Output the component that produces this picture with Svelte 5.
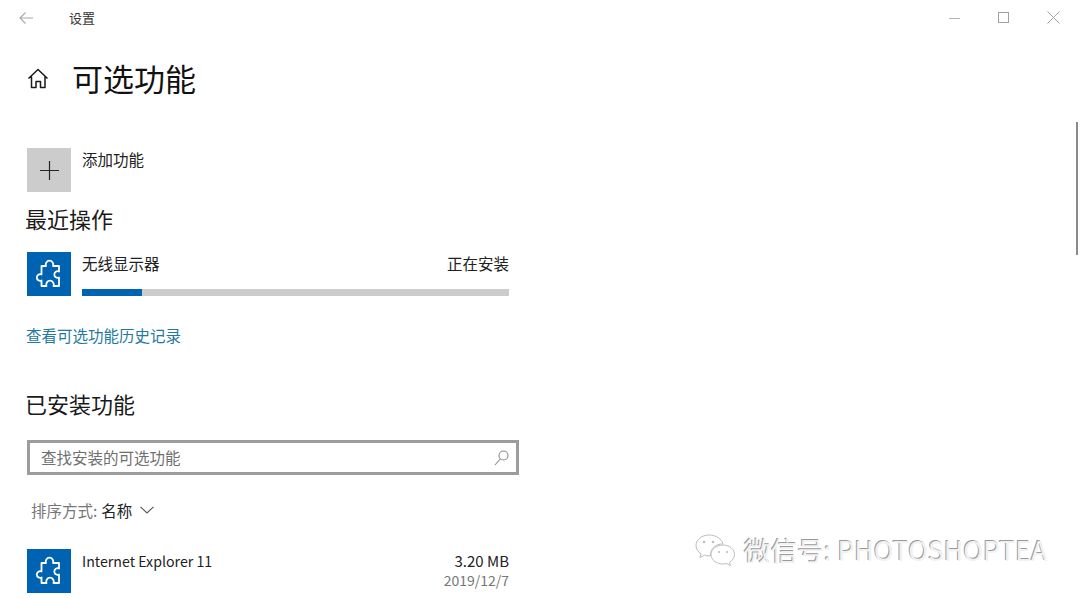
<script>
  const puzzle = 'M14.500 14H19a3.800 3.800 0 1 1 7 0h6v5.500a3.300 3.300 0 1 0 0 6V34h-5.500a3.800 3.800 0 1 0-7 0h-5v-5.500a3.300 3.300 0 1 1 0-6z';
</script>

{#snippet tile()}
  <div class="tile blue" aria-hidden="true">
    <svg width="44" height="44" viewBox="0 0 44 44" fill="none" stroke="#fff" stroke-width="1.8" stroke-linejoin="round">
      <path d={puzzle} />
    </svg>
  </div>
{/snippet}

<div class="page">
  <header class="titlebar">
    <svg class="back" width="14" height="12" viewBox="0 0 14 12" fill="none" stroke="#a8a8a8" stroke-width="1.1">
      <path d="M14 6H1M6.500.500 1 6l5.500 5.500" />
    </svg>
    <span class="app-name">设置</span>
  </header>

  <div class="page-title">
    <svg width="22" height="21" viewBox="0 0 22 21" fill="none" stroke="#1a1a1a" stroke-width="1.5" stroke-linejoin="round">
      <path d="M1.500 10.500 11 1.500l9.500 9M4.500 8.500V19.500h4.500v-6h4.500v6h4.500V8.500" />
    </svg>
    <h1>可选功能</h1>
  </div>

  <div class="add-row">
    <div class="tile grey" aria-hidden="true">
      <svg width="19" height="19" viewBox="0 0 19 19" stroke="#262626" stroke-width="1.2">
        <path d="M9.500 0v19M0 9.500h19" />
      </svg>
    </div>
    <span class="row-text">添加功能</span>
  </div>

  <h2 class="recent">最近操作</h2>

  <div class="feature">
    {@render tile()}
    <div class="feature-body">
      <div class="feature-line">
        <span class="row-text">无线显示器</span>
        <span class="row-text">正在安装</span>
      </div>
      <div class="progress"><div class="progress-fill"></div></div>
    </div>
  </div>

  <a class="history" href="#history">查看可选功能历史记录</a>

  <h2 class="installed">已安装功能</h2>

  <div class="search">
    <span class="placeholder">查找安装的可选功能</span>
    <svg width="15" height="16" viewBox="0 0 15 16" fill="none" stroke="#8a8a8a" stroke-width="1.1">
      <circle cx="9.500" cy="5.500" r="4.500" />
      <path d="M6.200 9 1 15" />
    </svg>
  </div>

  <div class="sort">
    <span class="sort-label">排序方式:</span>
    <span class="sort-value">名称</span>
    <svg width="14" height="8" viewBox="0 0 14 8" fill="none" stroke="#555" stroke-width="1.1">
      <path d="M.5.800 7 7l6.500-6.200" />
    </svg>
  </div>

  <div class="feature">
    {@render tile()}
    <div class="feature-body">
      <div class="feature-line ie">
        <span class="row-text">Internet Explorer 11</span>
        <span class="row-text">3.20 MB</span>
      </div>
      <div class="date">2019/12/7</div>
    </div>
  </div>

  <!-- window chrome and watermark sit over the page -->
  <div class="win-controls" aria-hidden="true">
    <svg width="12" height="12" viewBox="0 0 12 12" stroke="#b4b4b4" fill="none"><path d="M0 6.500h11" /></svg>
    <svg width="12" height="12" viewBox="0 0 12 12" stroke="#a0a0a0" fill="none"><rect x=".5" y=".5" width="10" height="10" /></svg>
    <svg width="13" height="13" viewBox="0 0 13 13" stroke="#a0a0a0" fill="none"><path d="M.5.500l12 12M12.500.500l-12 12" /></svg>
  </div>
  <div class="scrollbar"></div>

  <div class="watermark">
    <svg width="44" height="32" viewBox="0 0 44 32" fill="#fff" stroke="#bdbdbd" stroke-width="1">
      <path d="M14 1C7 1 1 5.500 1 11.500c0 3.500 2 6.300 5 8.300l-1 3.700 4.500-2.300c1.500.4 3 .6 4.500.6h1.500C15 15 21 9.500 28 10 27 5 21 1 14 1z" />
      <path d="M28 11c-6.500 0-12 4.300-12 9.500S21.500 30 28 30c1.300 0 2.600-.2 3.800-.5l3.700 2-1-3.200c3-1.800 5-4.600 5-7.800 0-5.200-5-9.500-11.500-9.500z" />
      <circle cx="9" cy="8" r="1.300" stroke="none" fill="#bdbdbd" />
      <circle cx="18" cy="8" r="1.300" stroke="none" fill="#bdbdbd" />
      <circle cx="24" cy="18" r="1.100" stroke="none" fill="#bdbdbd" />
      <circle cx="32" cy="18" r="1.100" stroke="none" fill="#bdbdbd" />
    </svg>
    <span>微信号: PHOTOSHOPTEA</span>
  </div>
</div>

<style>
  :global(body) {
    margin: 0;
    background: #fff;
  }

  .page {
    position: relative;
    width: 1080px;
    height: 598px;
    overflow: hidden;
    background: #fff;
    color: #1a1a1a;
    font-family: "Noto Sans CJK SC", "Noto Sans", sans-serif;
    font-size: 15.5px;
  }

  .titlebar {
    display: flex;
    align-items: center;
    height: 35px;
    padding-left: 19px;
    box-sizing: border-box;
  }
  .back { margin-right: 36px; }
  .app-name { font-size: 13px; color: #333; }

  .page-title {
    display: flex;
    align-items: center;
    height: 46px;
    margin-top: 20px;
    padding-left: 27px;
  }
  .page-title h1 {
    margin: 0 0 0 23px;
    font-size: 31px;
    font-weight: 400;
    line-height: 46px;
    color: #111;
  }

  .tile {
    display: grid;
    place-items: center;
    flex: none;
    width: 44px;
    height: 44px;
  }
  .tile.grey { background: #cccccc; }
  .tile.blue { background: #0063b1; }

  .add-row {
    display: flex;
    align-items: flex-start;
    gap: 11px;
    margin-top: 47px;
    padding-left: 27px;
  }
  .row-text {
    line-height: 22px;
    color: #222;
    white-space: nowrap;
  }

  h2 {
    margin: 0;
    padding-left: 25px;
    font-size: 22px;
    font-weight: 400;
    line-height: 32px;
    color: #1a1a1a;
  }
  .recent { margin-top: 10px; }
  .installed { margin-top: 40px; }

  .feature {
    display: flex;
    gap: 11px;
    width: 482px;
    margin-left: 27px;
  }
  .recent + .feature { margin-top: 18px; }
  .feature-body {
    flex: 1;
    min-width: 0;
    display: flex;
    flex-direction: column;
  }
  .feature-line {
    display: flex;
    justify-content: space-between;
  }
  .progress {
    height: 7px;
    margin-top: 15px;
    background: #cccccc;
  }
  .progress-fill {
    width: 14%;
    height: 100%;
    background: #0063b1;
  }

  .history {
    display: block;
    margin-top: 27px;
    padding-left: 26px;
    line-height: 24px;
    color: #1f7a9e;
    text-decoration: none;
  }

  .search {
    display: flex;
    align-items: center;
    justify-content: space-between;
    box-sizing: border-box;
    width: 492px;
    height: 35px;
    margin: 21px 0 0 27px;
    padding: 0 7px 0 11px;
    border: 3px solid #9c9c9c;
  }
  .placeholder { color: #6f6f6f; padding-bottom: 2px; }

  .sort {
    display: flex;
    align-items: center;
    height: 24px;
    margin: 23px 0 0 31px;
  }
  .sort-label { color: #777; }
  .sort-value { margin-left: 4px; color: #222; }
  .sort svg { margin-left: 8px; }

  .sort + .feature { margin-top: 27px; }
  .date {
    align-self: flex-end;
    line-height: 20px;
    font-size: 14px;
    color: #777;
  }
  .feature-line.ie { height: 21px; }
  .ie .row-text { line-height: 24px; }
  .ie .row-text:first-child { font-size: 14.2px; }
  .ie .row-text:last-child { font-size: 15px; }

  .win-controls {
    position: absolute;
    top: 11px;
    right: 20px;
    display: flex;
    align-items: center;
    gap: 37px;
  }

  .scrollbar {
    position: absolute;
    top: 122px;
    left: 1076px;
    width: 2px;
    height: 133px;
    background: #8a8a8a;
  }

  .watermark {
    position: absolute;
    left: 695px;
    top: 534px;
    display: flex;
    align-items: center;
    gap: 5px;
    font-size: 26.7px;
    line-height: 32px;
    white-space: nowrap;
    color: #f1f1f1;
    text-shadow: -1px -1px 0 #9a9a9a, 1px 1px 0 #fff;
  }
</style>
